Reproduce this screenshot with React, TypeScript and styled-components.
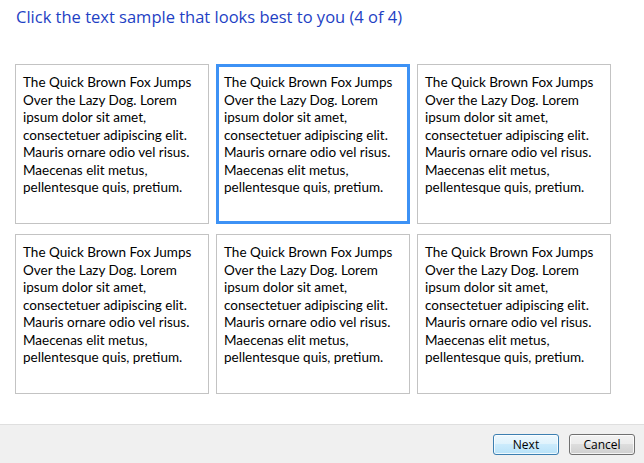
import React from "react";
import styled, { createGlobalStyle } from "styled-components";

const GlobalStyle = createGlobalStyle`
  html, body {
    margin: 0;
    padding: 0;
    background: #ffffff;
  }
  body {
    font-family: "Open Sans", "Noto Sans", sans-serif;
  }
  * {
    box-sizing: border-box;
  }
`;

const Window = styled.div`
  width: 644px;
  height: 463px;
  display: flex;
  flex-direction: column;
  background: #ffffff;
  overflow: hidden;
`;

const Content = styled.div`
  flex: 1;
  display: flex;
  flex-direction: column;
  padding: 6px 15px 0 15px;
`;

const Title = styled.h1`
  margin: 0 0 0 1px;
  font-family: "Open Sans", "Noto Sans", sans-serif;
  font-weight: 400;
  font-size: 16.5px;
  line-height: 22px;
  color: #1e3fc4;
`;

const Grid = styled.div`
  margin-top: 36px;
  display: grid;
  grid-template-columns: repeat(3, 194px);
  grid-auto-rows: 160px;
  column-gap: 7px;
  row-gap: 10px;
`;

const Sample = styled.div<{ $selected?: boolean }>`
  border: 1px solid ${({ $selected }) => ($selected ? "#3d92f5" : "#c3c3c3")};
  box-shadow: ${({ $selected }) => ($selected ? "inset 0 0 0 2px #3d92f5" : "none")};
  padding: 9px 4px 0 7px;
  font-family: "Lato", "Noto Sans", sans-serif;
  font-size: 13.5px;
  line-height: 17.5px;
  color: #000000;
  cursor: pointer;
`;

const Footer = styled.div`
  height: 39px;
  background: #f0f0f0;
  border-top: 1px solid #dfdfdf;
  display: flex;
  justify-content: flex-end;
  align-items: flex-start;
  gap: 10px;
  padding: 9px 9px 0 0;
`;

const Button = styled.button<{ $default?: boolean }>`
  width: 66px;
  height: 21px;
  padding: 0;
  border-radius: 3px;
  border: 1px solid ${({ $default }) => ($default ? "#3c7fb1" : "#707070")};
  background: ${({ $default }) =>
    $default
      ? "linear-gradient(#eef8fe 0%, #def2fc 50%, #cbebfc 50%, #b9e2f8 100%)"
      : "linear-gradient(#f2f2f2 0%, #ebebeb 50%, #dddddd 50%, #cfcfcf 100%)"};
  box-shadow: inset 0 0 0 1px rgba(255, 255, 255, 0.75);
  font-family: "Open Sans", "Noto Sans", sans-serif;
  font-size: 12px;
  color: #000000;
  cursor: pointer;
`;

const text =
  "The Quick Brown Fox Jumps Over the Lazy Dog. Lorem ipsum dolor sit amet, consectetuer adipiscing elit. Mauris ornare odio vel risus. Maecenas elit metus, pellentesque quis, pretium.";

export default function App() {
  const samples = [0, 1, 2, 3, 4, 5];
  return (
    <>
      <GlobalStyle />
      <Window>
        <Content>
          <Title>Click the text sample that looks best to you (4 of 4)</Title>
          <Grid>
            {samples.map((i) => (
              <Sample key={i} $selected={i === 1}>
                {text}
              </Sample>
            ))}
          </Grid>
        </Content>
        <Footer>
          <Button $default>Next</Button>
          <Button>Cancel</Button>
        </Footer>
      </Window>
    </>
  );
}
